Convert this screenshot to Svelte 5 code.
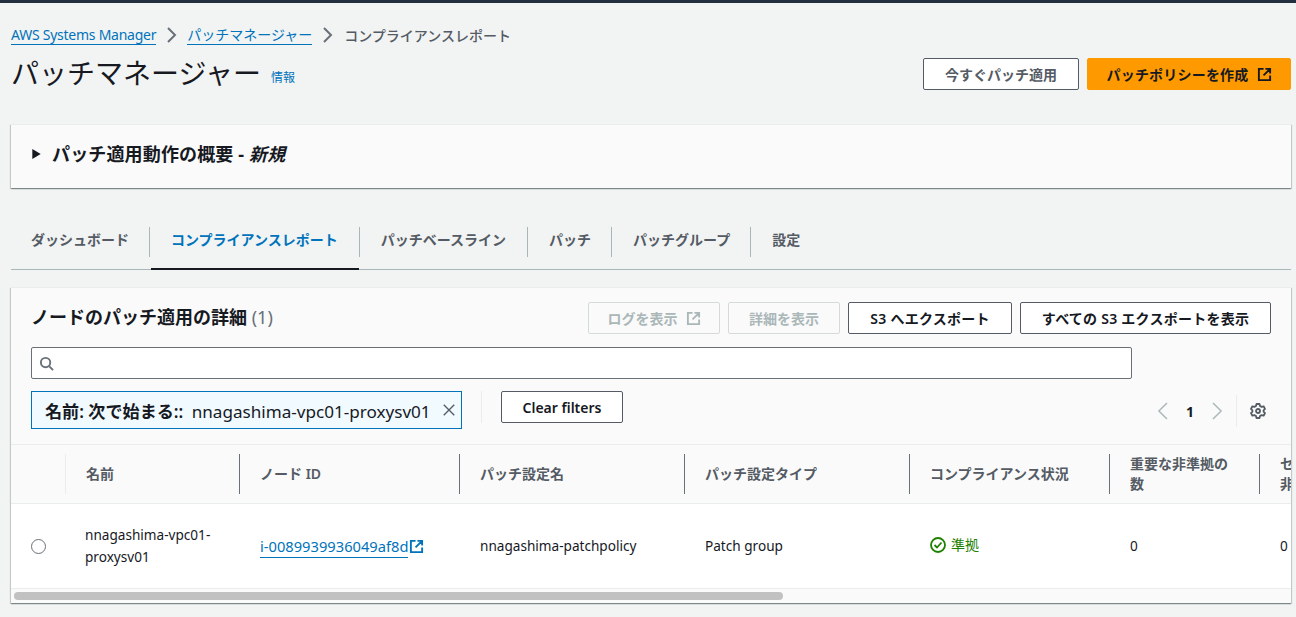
<script>
  const columns = [
    { label: '名前', width: 174 },
    { label: 'ノード ID', width: 220 },
    { label: 'パッチ設定名', width: 225 },
    { label: 'パッチ設定タイプ', width: 225 },
    { label: 'コンプライアンス状況', width: 200 },
    { label: '重要な非準拠の数', width: 150 },
    { label: 'セキュリティ非準拠の数', width: 140 }
  ];
  const tabs = ['ダッシュボード', 'コンプライアンスレポート', 'パッチベースライン', 'パッチ', 'パッチグループ', '設定'];
</script>

{#snippet ext()}
  <svg class="ext" viewBox="0 0 16 16" fill="none" stroke="currentColor" stroke-width="2"><path d="M7 2H2v12h12V9M9 2h5v5M14 2 7 9"/></svg>
{/snippet}

<div class="top"></div>
<main class="page">
  <nav class="crumbs">
    <a class="latin" href="#a">AWS Systems Manager</a>
    <svg class="sep" viewBox="0 0 12 16" fill="none" stroke="currentColor" stroke-width="2"><path d="m2 1 7 7-7 7"/></svg>
    <a href="#b">パッチマネージャー</a>
    <svg class="sep" viewBox="0 0 12 16" fill="none" stroke="currentColor" stroke-width="2"><path d="m2 1 7 7-7 7"/></svg>
    <span class="cur">コンプライアンスレポート</span>
  </nav>

  <header class="head">
    <div class="titlewrap">
      <h1>パッチマネージャー</h1>
      <a class="info" href="#i">情報</a>
    </div>
    <div class="actions">
      <button class="btn big">今すぐパッチ適用</button>
      <button class="btn primary big">パッチポリシーを作成 {@render ext()}</button>
    </div>
  </header>

  <section class="panel">
    <svg class="caret" viewBox="0 0 10 12"><path d="M0 0 10 6 0 12z" fill="#16191f"/></svg>
    <h2>パッチ適用動作の概要 - <em>新規</em></h2>
  </section>

  <div class="tabs">
    {#each tabs as t, i}
      <div class="tab" class:active={i === 1} class:last={i === tabs.length - 1}><span>{t}</span></div>
    {/each}
  </div>

  <section class="card">
    <div class="cardhead">
      <h3>ノードのパッチ適用の詳細 <span class="count">(1)</span></h3>
      <div class="cardactions">
        <button class="btn dis w-log">ログを表示 {@render ext()}</button>
        <button class="btn dis w-detail">詳細を表示</button>
        <button class="btn dark spaced w-export">S3 へエクスポート</button>
        <button class="btn dark spaced w-all">すべての S3 エクスポートを表示</button>
      </div>
    </div>

    <div class="search">
      <svg viewBox="0 0 16 16" fill="none" stroke="#687078" stroke-width="2"><circle cx="7" cy="7" r="5"/><path d="m11 11 4 4"/></svg>
    </div>

    <div class="filters">
      <div class="token">
        <span><b>名前: 次で始まる::</b> nnagashima-vpc01-proxysv01</span>
        <svg viewBox="0 0 16 16" fill="none" stroke="#545b64" stroke-width="1.6"><path d="m2 2 12 12M14 2 2 14"/></svg>
      </div>
      <div class="divider"></div>
      <button class="btn dark clear">Clear filters</button>
      <div class="pager">
        <svg class="chev" viewBox="0 0 12 20" fill="none" stroke="#aab7b8" stroke-width="1.6"><path d="M11 1 2 10l9 9"/></svg>
        <span class="pnum">1</span>
        <svg class="chev" viewBox="0 0 12 20" fill="none" stroke="#aab7b8" stroke-width="1.6"><path d="m1 1 9 9-9 9"/></svg>
        <div class="pdiv"></div>
        <svg class="gear" viewBox="0 0 16 16" fill="none" stroke="#545b64" stroke-width="1.8"><path d="M6.500 1h3l.5 2 1.600.9 2-.6 1.400 2.600-1.400 1.400v1.400l1.400 1.400-1.400 2.600-2-.6-1.600.9-.5 2h-3l-.5-2-1.600-.9-2 .6L1 10.100l1.400-1.400V7.300L1 5.900l1.400-2.600 2 .6L6 3z" stroke-linejoin="round"/><circle cx="8" cy="8" r="2"/></svg>
      </div>
    </div>

    <div class="tablewrap">
      <table>
        <thead>
          <tr>
            <th class="sel"></th>
            {#each columns as c, i}
              <th style="width:{c.width}px"><div class="th" class:faint={i === 0}>{c.label}</div></th>
            {/each}
          </tr>
        </thead>
        <tbody>
          <tr>
            <td class="sel"><span class="radio"></span></td>
            <td class="namecell"><div class="wrapname">nnagashima-vpc01-proxysv01</div></td>
            <td class="idcell"><a class="idlink" href="#n">i-0089939936049af8d</a><svg class="ext blue" viewBox="0 0 16 16" fill="none" stroke="currentColor" stroke-width="2"><path d="M7 2H2v12h12V9M9 2h5v5M14 2 7 9"/></svg></td>
            <td>nnagashima-patchpolicy</td>
            <td>Patch group</td>
            <td><span class="ok"><svg viewBox="0 0 16 16" fill="none" stroke="#1d8102" stroke-width="1.8"><circle cx="8" cy="8" r="7"/><path d="m4.500 8 2.500 2.500 4.500-5"/></svg>準拠</span></td>
            <td>0</td>
            <td>0</td>
          </tr>
        </tbody>
      </table>
    </div>
    <div class="scrolltrack"><div class="thumb"></div></div>
  </section>
</main>

<style>
  :global(body) {
    margin: 0;
    background: #f2f3f3;
    overflow: hidden;
    font-family: "Noto Sans", "Noto Sans CJK JP", sans-serif;
    color: #16191f;
    font-size: 14px;
  }
  .top { height: 3px; background: #232f3e; }
  .page { padding: 0 5px 0 11px; height: 614px; box-sizing: border-box; }
  a { color: #0073bb; text-decoration: none; }

  .crumbs { display: flex; align-items: center; height: 20px; padding-top: 22px; font-size: 14px; }
  .crumbs a { border-bottom: 1px solid #0073bb; line-height: 18px; }
  .crumbs a.latin { letter-spacing: -.25px; }
  .sep { width: 12px; height: 16px; color: #687078; margin: 0 9px 0 10px; }
  .cur { color: #545b64; font-weight: 500; margin-left: 1px; }

  .head { display: flex; justify-content: space-between; align-items: flex-start; margin-top: 3px; }
  .titlewrap { display: flex; align-items: flex-end; margin-top: 6px; }
  h1 { margin: 0; font-weight: 400; font-size: 28px; line-height: 38px; }
  .info { font-size: 12px; margin: 0 0 5px 10px; line-height: 18px; }
  .actions { display: flex; gap: 8px; margin-top: 10px; }

  .btn {
    box-sizing: border-box;
    display: inline-flex; align-items: center; justify-content: center; gap: 8px;
    height: 32px;
    padding: 0;
    background: #fff;
    border: 1px solid #545b64;
    border-radius: 2px;
    font: 600 14px "Noto Sans", "Noto Sans CJK JP", sans-serif;
    color: #545b64;
    white-space: nowrap;
  }
  .big { width: 156px; }
  .primary { width: 204px; background: #ff9900; border-color: #ff9900; color: #16191f; letter-spacing: .2px; }
  .dark { color: #16191f; }
  .spaced { letter-spacing: .25px; }
  .dis { background: #fafafa; border-color: #d5dbdb; color: #aab7b8; }
  .w-log { width: 132px; }
  .w-detail { width: 112px; }
  .w-export { width: 164px; }
  .w-all { width: 251px; }
  .ext { width: 15px; height: 15px; flex: none; }

  .panel {
    display: flex; align-items: center; gap: 11px;
    margin-top: 32px;
    height: 64px;
    padding: 0 0 6px 21px;
    background: #fafafa;
    border-top: 1px solid #eaeded;
    box-sizing: border-box;
    box-shadow: 0 1px 1px 0 rgba(0,28,36,.3), 1px 1px 1px 0 rgba(0,28,36,.15), -1px 1px 1px 0 rgba(0,28,36,.15);
  }
  .caret { width: 9px; height: 10px; }
  h2 { margin: 0; font-size: 18px; font-weight: 700; line-height: 28px; letter-spacing: .15px; }
  h2 em { font-style: italic; }

  .tabs {
    display: flex;
    margin: 32px 0 0;
    height: 49px;
    border-bottom: 1px solid #aab7b8;
  }
  .tab {
    position: relative;
    display: flex; align-items: center;
    height: 49px;
    padding: 0 21px;
    box-sizing: border-box;
    font-weight: 600; font-size: 14px; color: #545b64;
    white-space: nowrap;
  }
  .tab:first-child { padding-left: 20px; }
  .tab:nth-child(2), .tab:nth-child(3) { padding-right: 22px; }
  .tab:not(.last)::after {
    content: ""; position: absolute; right: 0; top: 7px; height: 30px; width: 1px; background: #aab7b8;
  }
  .tab span { margin-top: -11px; }
  .tab.active { color: #0073bb; }
  .tab.active::before {
    content: ""; position: absolute; left: 1px; right: 1px; bottom: -1px; height: 2px; background: #16191f;
  }

  .card {
    margin-top: 17px;
    height: 316px;
    background: #fafafa;
    border-top: 1px solid #eaeded;
    box-sizing: border-box;
    overflow: hidden;
    box-shadow: 0 1px 1px 0 rgba(0,28,36,.3), 1px 1px 1px 0 rgba(0,28,36,.15), -1px 1px 1px 0 rgba(0,28,36,.15);
    display: flex; flex-direction: column;
  }
  .cardhead { display: flex; justify-content: space-between; align-items: center; padding: 14px 20px 0 20px; }
  h3 { margin: -2px 0 0; font-size: 18px; font-weight: 700; line-height: 32px; }
  .count { color: #687078; font-weight: 400; }
  .cardactions { display: flex; gap: 8px; }

  .search {
    box-sizing: border-box;
    margin: 13px 0 0 20px;
    width: 1101px; height: 32px;
    background: #fff;
    border: 1px solid #687078;
    border-radius: 2px;
    display: flex; align-items: center; padding-left: 7px;
  }
  .search svg { width: 15px; height: 15px; }

  .filters { display: flex; align-items: flex-start; margin: 12px 20px 0 20px; }
  .token {
    box-sizing: border-box;
    display: flex; align-items: center; justify-content: space-between;
    width: 431px; height: 38px;
    padding: 0 5px 0 13px;
    background: #f1faff;
    border: 1px solid #0073bb;
    font-size: 17.100px;
    white-space: nowrap;
  }
  .token b { font-weight: 600; margin-right: 4px; }
  .token svg { width: 14px; height: 14px; flex: none; }
  .divider { width: 1px; height: 32px; background: #eaeded; margin: 0 19px; }
  .clear { width: 122px; }
  .pager { margin-left: auto; display: flex; align-items: center; height: 32px; margin-top: 4px; margin-right: 5px; }
  .chev { width: 11px; height: 18px; }
  .pnum { width: 44px; text-align: center; font-weight: 700; font-size: 14px; }
  .pdiv { width: 1px; height: 32px; background: #eaeded; margin: 0 13px; }
  .gear { width: 16px; height: 16px; }

  .tablewrap { margin-top: 15px; overflow: hidden; flex: none; }
  table { border-collapse: separate; border-spacing: 0; table-layout: fixed; width: 1388px; }
  th {
    height: 60px; padding: 0; text-align: left;
    background: #fafafa;
    border-top: 1px solid #eaeded;
    border-bottom: 1px solid #eaeded;
    font-weight: 600; font-size: 14px; color: #545b64;
    box-sizing: border-box;
  }
  .th {
    height: 40px; display: flex; align-items: center;
    border-left: 1px solid #687078;
    padding: 0 30px 0 20px;
    line-height: 20px;
  }
  .th.faint { border-left-color: #eaeded; }
  .sel { width: 54px; text-align: center; padding: 0; }
  td {
    height: 85px; padding: 0 10px 0 21px;
    background: #fff;
    border-bottom: 1px solid #eaeded;
    box-sizing: border-box;
    font-size: 13.600px; line-height: 22px;
  }
  td.sel { padding: 0; }
  td.namecell { padding-left: 20px; }
  .radio { display: inline-block; width: 13px; height: 13px; border: 1px solid #687078; border-radius: 50%; vertical-align: middle; margin-bottom: 2px; background: #fff; }
  .wrapname { width: 135px; overflow-wrap: anywhere; }
  .idcell { white-space: nowrap; }
  .idlink { border-bottom: 1px solid #0073bb; padding-bottom: 1px; font-size: 14.700px; }
  .ext.blue { color: #0073bb; width: 15px; height: 15px; vertical-align: -2px; margin-left: 1px; }
  .ok { color: #1d8102; display: inline-flex; align-items: center; gap: 5px; font-size: 14px; }
  .ok svg { width: 16px; height: 16px; }

  .scrolltrack { background: #fafafa; flex: 1; padding: 3px; box-sizing: border-box; }
  .thumb { width: 769px; height: 8px; background: #c1c1c1; border-radius: 4px; }
</style>
